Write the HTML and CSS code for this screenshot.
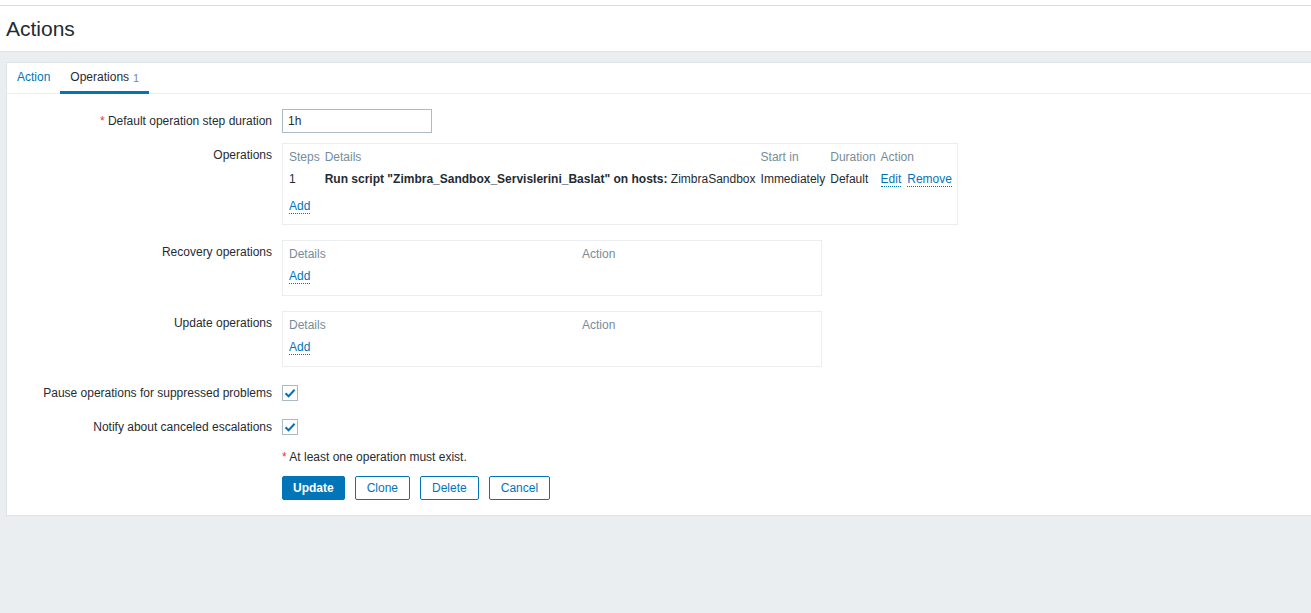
FILE: index.html
```html
<!DOCTYPE html>
<html>
<head>
<meta charset="utf-8">
<title>Actions</title>
<link rel="stylesheet" href="styles.css">
</head>
<body>
<header class="page-header">
  <div class="header-inner"><h1 class="title">Actions</h1></div>
</header>
<main class="panel">
  <ul class="tabs">
    <li class="tab"><a class="tab-link">Action</a></li>
    <li class="tab active"><span class="tab-label">Operations</span><span class="tab-count">1</span></li>
  </ul>
  <div class="form">
    <div class="row">
      <div class="label"><span class="req">*</span> Default operation step duration</div>
      <div class="control"><div class="input">1h</div></div>
    </div>
    <div class="row">
      <div class="label lbl-top">Operations</div>
      <div class="control">
        <div class="box box-ops">
          <table class="list">
            <tr class="head"><td>Steps</td><td>Details</td><td>Start in</td><td>Duration</td><td class="last">Action</td></tr>
            <tr><td>1</td><td><b>Run script "Zimbra_Sandbox_Servislerini_Baslat" on hosts:</b> ZimbraSandbox</td><td>Immediately</td><td>Default</td><td class="last"><span class="actions"><a class="link">Edit</a><a class="link">Remove</a></span></td></tr>
          </table>
          <div class="add-row add-gap"><a class="link">Add</a></div>
        </div>
      </div>
    </div>
    <div class="row">
      <div class="label lbl-top">Recovery operations</div>
      <div class="control">
        <div class="box box-fixed">
          <table class="list">
            <tr class="head"><td class="col-details">Details</td><td class="last">Action</td></tr>
          </table>
          <div class="add-row"><a class="link">Add</a></div>
        </div>
      </div>
    </div>
    <div class="row row-last-box">
      <div class="label lbl-top">Update operations</div>
      <div class="control">
        <div class="box box-fixed">
          <table class="list">
            <tr class="head"><td class="col-details">Details</td><td class="last">Action</td></tr>
          </table>
          <div class="add-row"><a class="link">Add</a></div>
        </div>
      </div>
    </div>
    <div class="row row-check">
      <div class="label">Pause operations for suppressed problems</div>
      <div class="control"><span class="checkbox"><svg width="12" height="10" viewBox="0 0 12 10"><path d="M1.5 5.2 L4.6 8.2 L10.6 1.8" fill="none" stroke="#0275b8" stroke-width="2"/></svg></span></div>
    </div>
    <div class="row row-check">
      <div class="label">Notify about canceled escalations</div>
      <div class="control"><span class="checkbox"><svg width="12" height="10" viewBox="0 0 12 10"><path d="M1.5 5.2 L4.6 8.2 L10.6 1.8" fill="none" stroke="#0275b8" stroke-width="2"/></svg></span></div>
    </div>
    <div class="row row-note">
      <div class="label"></div>
      <div class="control note"><span class="req">*</span> At least one operation must exist.</div>
    </div>
    <div class="row row-buttons">
      <div class="label"></div>
      <div class="control buttons">
        <button class="btn btn-primary">Update</button>
        <button class="btn">Clone</button>
        <button class="btn">Delete</button>
        <button class="btn">Cancel</button>
      </div>
    </div>
  </div>
</main>
</body>
</html>
```
FILE: styles.css
```css
html, body {
  margin: 0;
  padding: 0;
}
body {
  background: #ebeef0;
  font-family: "Liberation Sans", Arial, sans-serif;
  font-size: 12px;
  color: #1f2c33;
  overflow: hidden;
  height: 613px;
}
.page-header {
  background: #ffffff;
  padding-top: 5px;
}
.header-inner {
  border-top: 1px solid #dcdfe1;
  border-bottom: 1px solid #dfe4e7;
  height: 45px;
  padding-left: 6px;
}
.title {
  margin: 0;
  font-size: 21px;
  font-weight: normal;
  line-height: 45px;
  color: #1f2c33;
}
.panel {
  display: block;
  margin: 10px -20px 0 6px;
  background: #ffffff;
  border: 1px solid #dfe4e7;
}
.tabs {
  list-style: none;
  margin: 0;
  padding: 0;
  display: flex;
  border-bottom: 1px solid #ebeef0;
  height: 30px;
}
.tab {
  padding: 0 10px;
  height: 31px;
  line-height: 29px;
  box-sizing: border-box;
}
.tab-link {
  color: #0275b8;
}
.tab.active {
  border-bottom: 3px solid #0275b8;
  height: 31px;
  line-height: 29px;
}
.tab-count {
  color: #768d99;
  font-size: 11px;
  margin-left: 4px;
  position: relative;
  top: 1px;
}
.form {
  padding: 15px 0 15px 0;
}
.row {
  display: flex;
  align-items: flex-start;
  margin-bottom: 10px;
}
.row:last-child {
  margin-bottom: 0;
}
.row-last-box {
  margin-bottom: 9px;
}
.label {
  width: 265px;
  flex: none;
  text-align: right;
  line-height: 24px;
  padding-right: 10px;
  white-space: nowrap;
}
.req {
  color: #e33734;
}
.control {
  flex: none;
}
.input {
  width: 150px;
  height: 24px;
  box-sizing: border-box;
  border: 1px solid #acbbc2;
  padding: 0 5px;
  line-height: 22px;
}
.box {
  border: 1px solid #ebeef0;
  padding: 2px 5px 8px 6px;
  margin-bottom: 5px;
}
.box-ops {
  padding-bottom: 7px;
}
.box-fixed {
  width: 527px;
}
.list {
  border-collapse: collapse;
  white-space: nowrap;
}
.list td {
  padding: 0 5px 0 0;
  height: 22px;
  line-height: 22px;
  vertical-align: middle;
}
.list td.last {
  padding-right: 0;
}
.list .head td {
  color: #768d99;
}
.col-details {
  width: 288px;
}
.add-row {
  height: 22px;
  line-height: 22px;
}
.add-gap {
  margin-top: 5px;
}
.link {
  color: #0275b8;
  text-decoration: none;
  border-bottom: 1px dotted #0275b8;
  cursor: pointer;
}
.actions {
  display: inline-flex;
  gap: 6px;
}
.actions .link {
  line-height: 14px;
}
.row-check .label,
.row-check .control {
  height: 24px;
}
.row-check .control {
  display: flex;
  align-items: center;
}
.checkbox {
  width: 16px;
  height: 16px;
  box-sizing: border-box;
  border: 1px solid #acbbc2;
  background: #ffffff;
  display: flex;
  align-items: center;
  justify-content: center;
}
.row-note .label,
.row-note .control {
  line-height: 16px;
  height: 16px;
}
.row-note {
  margin-bottom: 11px;
}
.buttons {
  display: flex;
  gap: 10px;
}
.btn {
  height: 24px;
  box-sizing: border-box;
  border: 1px solid #0275b8;
  background: #ffffff;
  color: #0275b8;
  font-family: "Liberation Sans", Arial, sans-serif;
  font-size: 12px;
  padding: 0 11px;
  border-radius: 2px;
  line-height: 22px;
}
.btn-primary {
  background: #0275b8;
  color: #ffffff;
  font-weight: bold;
  padding: 0 10px;
}
```
